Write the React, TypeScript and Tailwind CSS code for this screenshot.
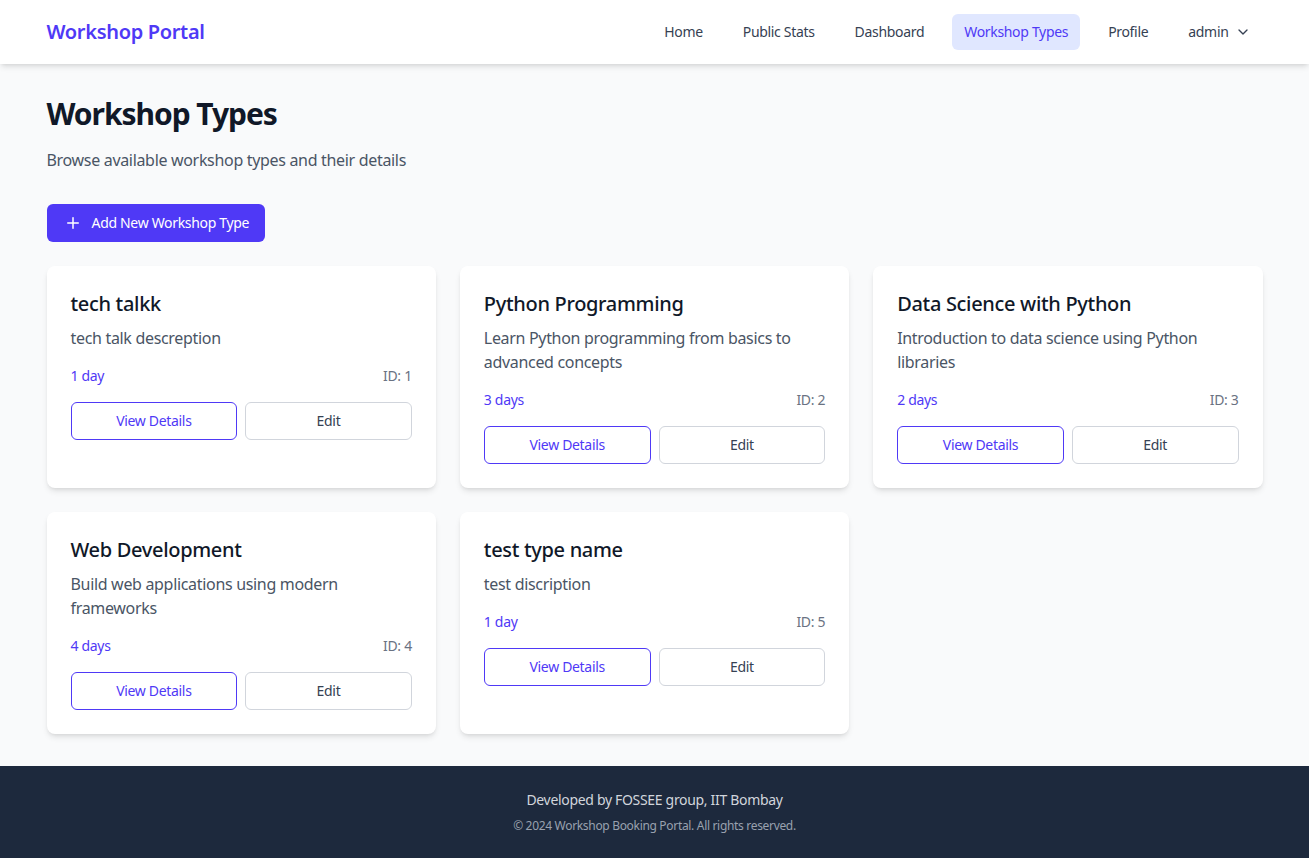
import React from "react";
import { ChevronDown, Plus } from "lucide-react";

const types = [
  { id: 1, name: "tech talkk", desc: "tech talk descreption", dur: "1 day" },
  { id: 2, name: "Python Programming", desc: "Learn Python programming from basics to advanced concepts", dur: "3 days" },
  { id: 3, name: "Data Science with Python", desc: "Introduction to data science using Python libraries", dur: "2 days" },
  { id: 4, name: "Web Development", desc: "Build web applications using modern frameworks", dur: "4 days" },
  { id: 5, name: "test type name", desc: "test discription", dur: "1 day" },
];

const links = ["Home", "Public Stats", "Dashboard", "Workshop Types", "Profile"];

export default function App() {
  return (
    <div className="min-h-screen flex flex-col bg-gray-50 text-gray-900 tracking-[-0.02em]" style={{ fontFamily: "'Noto Sans', sans-serif" }}>
      {/* NAV */}
      <nav className="bg-white shadow-md relative z-10">
        <div className="max-w-7xl mx-auto px-8 h-16 flex items-center justify-between">
          <span className="text-xl font-semibold text-indigo-600">Workshop Portal</span>
          <div className="flex items-center gap-4">
            {links.map((l) => (
              <a key={l}
                className={
                  l === "Workshop Types"
                    ? "px-3 py-2 rounded-md text-sm bg-indigo-100 text-indigo-600"
                    : "px-3 py-2 rounded-md text-sm text-gray-700"
                }>
                {l}
              </a>
            ))}
            <button className="px-3 py-2 text-sm text-gray-700 flex items-center gap-1.5">
              admin <ChevronDown size={16} />
            </button>
          </div>
        </div>
      </nav>

      {/* MAIN */}
      <main className="flex-1 max-w-7xl w-full mx-auto px-8 py-8">
        <h1 className="text-3xl font-bold text-gray-900 tracking-[-0.035em]">Workshop Types</h1>
        <p className="mt-4 text-gray-600">Browse available workshop types and their details</p>

        <button className="mt-8 h-[38px] pl-[17px] pr-4 rounded-md bg-indigo-600 text-white text-sm flex items-center gap-2.5">
          <Plus size={18} />
          Add New Workshop Type
        </button>

        <div className="mt-6 grid grid-cols-3 gap-6">
          {types.map((t) => (
            <div key={t.id} className="bg-white rounded-lg shadow-md p-6">
              <h3 className="text-xl font-medium text-gray-900">{t.name}</h3>
              <p className="mt-2 text-gray-600">{t.desc}</p>
              <div className="mt-4 flex items-center justify-between text-sm">
                <span className="text-indigo-600">{t.dur}</span>
                <span className="text-gray-500">ID: {t.id}</span>
              </div>
              <div className="mt-4 flex gap-2">
                <button className="flex-1 h-[38px] rounded-md border border-indigo-600 text-indigo-600 text-sm">
                  View Details
                </button>
                <button className="flex-1 h-[38px] rounded-md border border-gray-300 text-gray-700 text-sm">
                  Edit
                </button>
              </div>
            </div>
          ))}
        </div>
      </main>

      {/* FOOTER */}
      <footer className="bg-slate-800 py-6 text-center">
        <p className="text-sm text-gray-300">Developed by FOSSEE group, IIT Bombay</p>
        <p className="mt-2 text-xs text-gray-400">© 2024 Workshop Booking Portal. All rights reserved.</p>
      </footer>
    </div>
  );
}
